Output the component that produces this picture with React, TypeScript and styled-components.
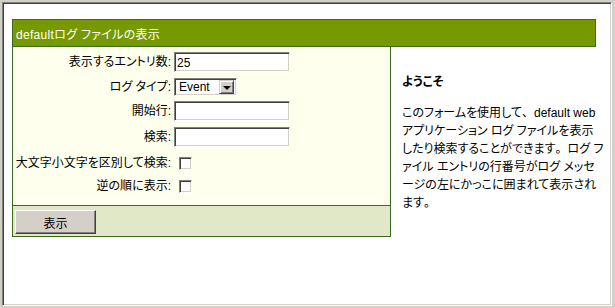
import React from 'react'
import styled, { createGlobalStyle } from 'styled-components'

const GlobalStyle = createGlobalStyle`
  html, body {
    margin: 0;
    padding: 0;
  }
  body {
    width: 615px;
    height: 308px;
    overflow: hidden;
    background: #d4d0c8;
    font-family: "Liberation Sans", "Noto Sans CJK JP", sans-serif;
    font-size: 12px;
    color: #000;
    font-feature-settings: "palt";
  }
`

const Frame = styled.div`
  box-sizing: border-box;
  width: 610px;
  height: 304px;
  margin: 2px 3px 2px 2px;
  background: #fff;
  border: 1px solid;
  border-color: #808080 #fff #fff #808080;
  box-shadow: inset 1px 1px #404040, inset -1px -1px #d4d0c8;
  padding: 16px 0 0 9px;
`

const Header = styled.div`
  box-sizing: border-box;
  width: 584px;
  height: 28px;
  background: #779900;
  border: 1px solid #3a6a20;
  color: #fff;
  padding: 8px 0 0 3px;
  line-height: 14px;
  white-space: nowrap;
  letter-spacing: 0.3px;
`

const Body = styled.div`
  display: flex;
  align-items: flex-start;
`

const FormPanel = styled.div`
  box-sizing: border-box;
  width: 379px;
  border: 1px solid #3a6a20;
  border-top: none;
  background: #ffffee;
  display: flex;
  flex-direction: column;
`

const Rows = styled.div`
  display: flex;
  flex-direction: column;
  padding: 2px 0 9px;
`

const Row = styled.div<{ $h: number }>`
  display: flex;
  align-items: center;
  height: ${p => p.$h}px;
`

const Label = styled.span`
  width: 158px;
  text-align: right;
  white-space: nowrap;
  line-height: 14px;
`

const Field = styled.div`
  margin-left: 3px;
  display: flex;
  align-items: center;
`

const TextInput = styled.input`
  box-sizing: border-box;
  width: 116px;
  height: 20px;
  margin: 0;
  padding: 1px 2px 0;
  font: inherit;
  font-size: 12px;
  background: #fff;
  border: 1px solid;
  border-color: #808080 #fff #fff #808080;
  box-shadow: inset 1px 1px #404040, inset -1px -1px #d4d0c8;
  outline: none;
`

const SelectBox = styled.div`
  box-sizing: border-box;
  width: 63px;
  height: 18px;
  background: #fff;
  border: 1px solid;
  border-color: #808080 #fff #fff #808080;
  box-shadow: inset 1px 1px #404040, inset -1px -1px #d4d0c8;
  display: flex;
  align-items: center;
  padding: 1px 2px 1px 4px;
`

const SelectValue = styled.span`
  flex: 1;
  line-height: 14px;
`

const SelectArrow = styled.span`
  box-sizing: border-box;
  width: 15px;
  height: 14px;
  background: #d4d0c8;
  border: 1px solid;
  border-color: #d4d0c8 #404040 #404040 #d4d0c8;
  box-shadow: inset 1px 1px #fff, inset -1px -1px #808080;
  display: flex;
  align-items: center;
  justify-content: center;
  &::after {
    content: '';
    border-left: 4px solid transparent;
    border-right: 4px solid transparent;
    border-top: 4px solid #000;
    margin-top: 1px;
  }
`

const Check = styled.input.attrs({ type: 'checkbox' })`
  appearance: none;
  box-sizing: border-box;
  width: 13px;
  height: 13px;
  margin: 0 0 0 5px;
  background: #fff;
  border: 1px solid;
  border-color: #808080 #fff #fff #808080;
  box-shadow: inset 1px 1px #404040, inset -1px -1px #d4d0c8;
`

const Footer = styled.div`
  border-top: 1px solid #3a6a20;
  background: #e0e8c8;
  height: 31px;
  box-sizing: border-box;
  padding: 4px 0 0 2px;
`

const Button = styled.button`
  box-sizing: border-box;
  width: 81px;
  height: 24px;
  margin: 0;
  padding: 0;
  font: inherit;
  font-size: 12px;
  background: #d4d0c8;
  border: 1px solid;
  border-color: #fff #404040 #404040 #fff;
  box-shadow: inset -1px -1px #808080, inset 1px 1px #d4d0c8;
  color: #000;
`

const Side = styled.div`
  padding: 26px 0 0 11px;
  white-space: nowrap;
`

const Title = styled.h3`
  margin: 0;
  font-size: 12px;
  font-weight: bold;
  line-height: 18px;
`

const Para = styled.p`
  margin: 13px 0 0;
  line-height: 18px;
`

const Punct = styled.span`
  font-feature-settings: normal;
`

export default function App() {
  return (
    <>
      <GlobalStyle />
      <Frame>
        <Header>defaultログ ファイルの表示</Header>
        <Body>
          <FormPanel>
            <Rows>
              <Row $h={26}>
                <Label>表示するエントリ数:</Label>
                <Field><TextInput defaultValue="25" /></Field>
              </Row>
              <Row $h={24}>
                <Label>ログ タイプ:</Label>
                <Field>
                  <SelectBox>
                    <SelectValue>Event</SelectValue>
                    <SelectArrow />
                  </SelectBox>
                </Field>
              </Row>
              <Row $h={24}>
                <Label>開始行:</Label>
                <Field><TextInput /></Field>
              </Row>
              <Row $h={27}>
                <Label>検索:</Label>
                <Field><TextInput /></Field>
              </Row>
              <Row $h={26}>
                <Label>大文字小文字を区別して検索:</Label>
                <Field><Check /></Field>
              </Row>
              <Row $h={20}>
                <Label>逆の順に表示:</Label>
                <Field><Check /></Field>
              </Row>
            </Rows>
            <Footer>
              <Button>表示</Button>
            </Footer>
          </FormPanel>
          <Side>
            <Title>ようこそ</Title>
            <Para>
              このフォームを使用して<Punct>、</Punct>default web<br />
              アプリケーション ログ ファイルを表示<br />
              したり検索することができます<Punct>。</Punct>ログ フ<br />
              ァイル エントリの行番号がログ メッセ<br />
              ージの左にかっこに囲まれて表示され<br />
              ます<Punct>。</Punct>
            </Para>
          </Side>
        </Body>
      </Frame>
    </>
  )
}
